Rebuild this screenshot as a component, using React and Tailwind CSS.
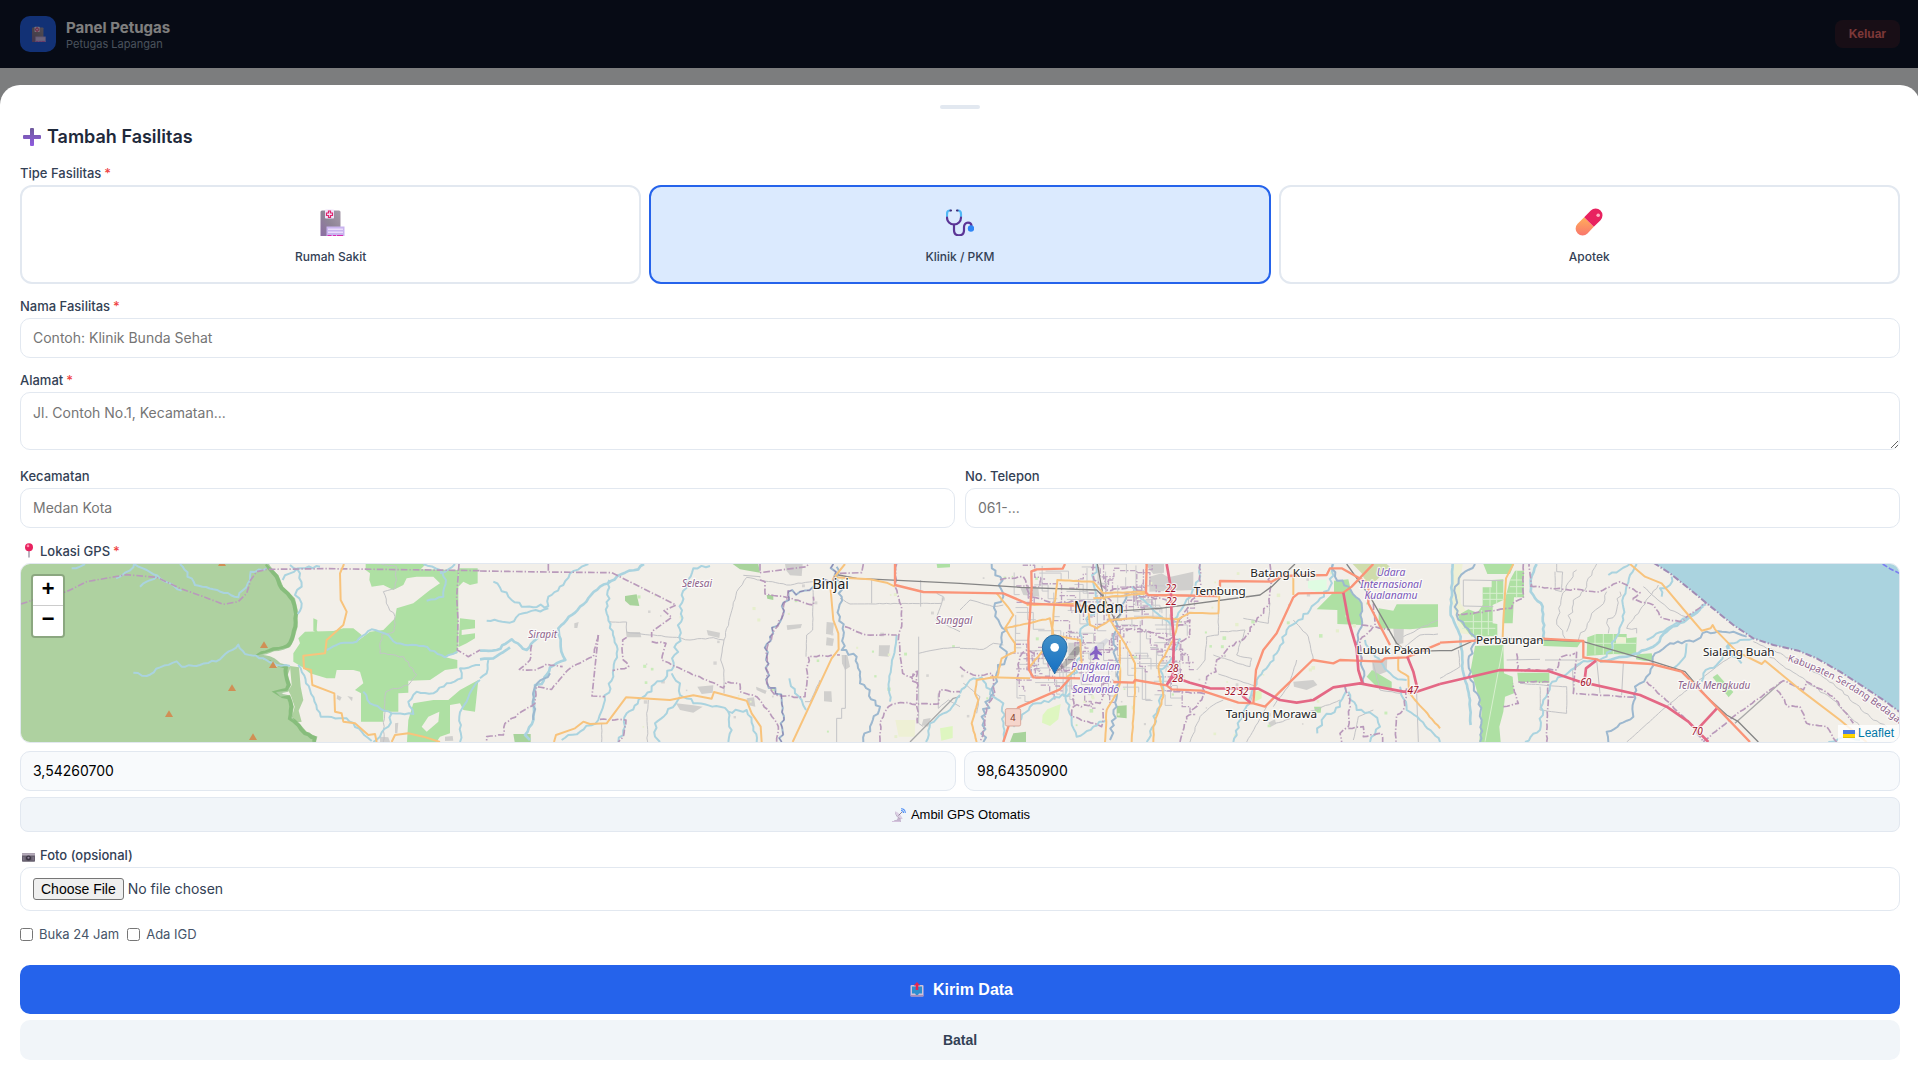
import React from "react";

/* ---------- Map data: [tile, kind, points, wobble] ---------- */
const TILE = 1440;

const AREAS = [
  [0, "park", "40,0 790,0 800,12 835,45 850,80 885,115 893,150 893,200 882,240 870,262 820,272 765,288 790,298 812,300 828,320 850,312 872,322 863,345 873,375 862,392 828,396 842,410 870,405 882,440 874,475 900,492 920,515 950,530 945,560 40,560"],
  [0, "tail", "870,318 897,322 902,380 910,420 896,452 905,485 886,488 876,470 884,440 872,405 865,392 875,375"],
  [0, "wood", "1097,0 1290,0 1262,28 1375,30 1375,230 1372,280 1330,290 1372,300 1372,325 1335,330 1290,360 1225,362 1225,398 1195,400 1195,455 1150,455 1150,485 1083,485 1083,400 1065,390 1090,370 1080,335 1060,330 1010,330 1005,355 980,355 930,340 905,320 880,305 880,280 900,250 895,235 915,215 1000,213 1030,205 1060,205 1085,225 1070,245 1110,215 1150,210 1185,175 1190,145 1240,130 1290,90 1320,70 1300,50 1250,50 1220,55 1210,75 1180,90 1150,75 1115,80 1108,60 1110,40 1097,30"],
  [0, "wood", "1375,25 1433,25 1433,70 1410,75 1390,65 1375,80"],
  [0, "wood", "1380,175 1425,180 1425,205 1385,210 1385,225 1425,220 1425,235 1400,250 1375,262"],
  [0, "wood", "1240,430 1300,420 1345,420 1380,390 1435,360 1425,455 1390,450 1380,430 1350,435 1350,520 1320,530 1300,560 1220,560 1225,480"],
  [0, "wood", "940,175 952,180 950,210 958,225 940,212"],
  [0, "land", "1265,500 1285,470 1318,455 1315,485 1280,515"],
  [0, "land", "1290,375 1360,340 1370,360 1310,385"],
  [0, "town", "1335,530 1358,528 1360,542 1335,543"],
  [0, "town", "1140,530 1165,532 1170,546 1140,546"],
  [0, "town", "1185,490 1195,488 1192,520 1185,520"],
  [0, "town", "1012,405 1025,412 1020,422 1010,416"],
  [0, "town", "1042,408 1058,412 1056,424"],

  [1, "grove", "435,108 470,103 478,138 450,136 435,122"],
  [1, "grove", "758,12 835,12 840,38 780,28"],
  [1, "grove", "100,522 152,522 152,546 104,546"],
  [1, "grove", "860,105 880,105 880,120 862,116"],
  [1, "wood", "1370,12 1410,12 1410,22 1372,24"],
  [1, "town", "915,12 968,12 965,48 930,46 918,30"],
  [1, "town", "283,190 296,186 292,204 283,204"],
  [1, "town", "920,196 966,192 962,204 922,210"],
  [1, "town", "1040,186 1062,188 1058,225 1038,222"],
  [1, "town", "1040,232 1062,236 1058,258 1038,256"],
  [1, "town", "1085,285 1102,285 1110,320 1095,330 1086,310"],
  [1, "town", "1197,256 1230,256 1226,290 1196,288"],
  [1, "town", "1032,394 1054,394 1056,426 1032,424"],
  [1, "town", "652,380 700,376 698,398 665,402"],
  [1, "town", "680,210 720,218 718,234 684,226"],
  [1, "town", "588,430 640,436 668,440 640,458 600,450"],
  [1, "town", "828,380 860,392 856,402 830,390"],
  [1, "town", "800,415 822,412 826,440 806,436"],
  [1, "town", "1330,478 1352,474 1345,500 1325,496"],
  [1, "town", "438,216 480,216 484,232 440,232"],
  [1, "pale", "1246,480 1306,480 1304,530 1256,530"],
  [1, "lime", "1380,505 1418,498 1418,534 1384,542"],

  [2, "town", "180,82 235,85 238,110 190,105"],
  [2, "town", "568,50 605,40 625,52 700,35 700,90 568,95"],
  [2, "town", "325,248 358,248 358,285 325,285"],
  [2, "town", "555,12 612,12 612,38 580,42"],
  [2, "air", "385,280 400,262 438,235 448,240 420,275 395,296"],
  [2, "town", "1000,365 1060,360 1072,375 1040,390 1002,380"],
  [2, "town", "1298,188 1332,185 1330,250 1305,255"],
  [2, "town", "1236,300 1282,295 1280,335 1240,350"],
  [2, "town", "925,488 945,478 948,492 930,502"],
  [2, "grove", "470,438 500,436 500,475 470,472"],
  [2, "grove", "160,520 198,515 198,546 150,546"],
  [2, "wood", "1122,62 1165,58 1175,100 1205,130 1205,195 1132,192 1132,150 1070,148 1122,95"],
  [2, "wood", "1256,145 1300,152 1310,133 1434,133 1434,200 1350,208 1256,205"],
  [2, "wood", "1220,350 1236,330 1295,365 1295,385 1252,382"],
  [2, "wood", "1062,440 1084,440 1082,458 1066,458"],
  [2, "olive", "1178,12 1280,12 1290,20 1238,72 1215,62 1205,40"],
  [2, "mint", "1044,62 1100,58 1100,90 1070,96 1044,84"],
  [2, "lime", "248,465 262,448 302,432 295,478 270,498 246,488"],
  [2, "lime", "884,395 905,390 905,415 884,425"],

  [3, "sea", "630,0 1420,0 1420,475 1378,455 1330,420 1270,380 1200,335 1130,295 1075,272 1000,255 940,235 880,195 800,130 740,80 690,40"],
  [3, "pale", "35,12 68,12 60,70 62,130 88,165 98,225 60,220 45,165 36,120"],
  [3, "wood", "130,12 222,12 210,42 142,42"],
  [3, "wood", "128,82 155,82 155,60 190,58 190,120 158,135 158,190 172,192 172,228 95,230 60,185 55,165 85,148 112,158 128,135"],
  [3, "wood", "210,60 225,32 252,32 252,112 222,112 218,190 192,190 192,130"],
  [3, "wood", "105,258 190,255 192,340 218,350 222,400 195,410 190,455 178,500 182,546 118,546 125,450 110,390 92,330"],
  [3, "wood", "310,238 425,242 412,262 310,258"],
  [3, "wood", "442,232 470,222 560,222 560,235 590,232 588,285 520,282 440,288"],
  [3, "wood", "232,338 328,338 328,368 235,366"],
  [3, "wood", "590,283 635,280 640,300 615,303 588,298"],
  [3, "wood", "818,352 832,342 880,396 866,412"],
  [3, "pale", "528,230 558,232 558,252 528,252"],
];

const LINES = [
  /* province and district boundaries */
  [0, "edge", "63,132 100,120 200,95 260,65 380,44 470,52 540,85 610,110 670,133 715,125 740,100 752,60 770,35 800,28 980,26 1440,32", 0],
  [0, "edge", "1377,12 1370,110 1374,180 1372,270 1405,290 1440,270", 0],
  [1, "edge", "0,33 200,36 395,38 588,135 552,152 575,172 515,215 515,232", 0],
  [1, "edge", "205,12 205,36", 0],
  [1, "edge", "440,232 428,240 430,300 446,320 398,332", 3],
  [1, "edge", "515,245 558,250 545,300 730,384 740,365 780,372 780,395 830,410 870,460 895,500 890,546", 2],
  [1, "edge", "355,225 340,290 270,325 215,388 170,380 165,430 75,490 70,525 20,530 20,546", 2],
  [1, "edge", "355,225 336,408 375,410", 0],
  [1, "edge", "155,255 150,300 118,328 165,330 200,312 248,320", 2],
  [1, "edge", "360,478 438,480 430,530 415,546", 2],
  [1, "edge", "840,12 840,38 980,20 985,12", 0],
  [1, "edge", "840,60 855,65 855,102 920,112 1000,135 1000,110", 2],
  [1, "edge", "925,90 905,175 880,215 862,260 860,370 885,405 975,410 985,290 1080,285", 4],
  [1, "edge", "1095,200 1160,225 1250,225", 2],
  [1, "edge", "1150,12 1145,38 1080,40", 0],
  [1, "edge", "1250,12 1245,80 1265,150 1265,200 1255,240 1268,340 1295,352 1312,330 1312,490", 3],
  [1, "edge", "1200,546 1200,490 1225,440 1250,430 1375,432 1380,390 1440,395", 3],
  [1, "edge", "1315,370 1295,362 1300,340", 0],
  [2, "edge", "930,12 928,130 888,185 860,225 800,270 770,300 768,335 740,350 725,420 680,470 660,546", 5],
  [2, "edge", "0,320 40,345 95,340 100,355 105,400 80,440 75,500 60,546", 4],
  [2, "edge", "170,360 180,290 200,270 260,290 270,330 330,330", 4],
  [2, "edge", "340,440 420,430 430,370 460,360", 5],
  [2, "edge", "345,380 335,470 425,500 430,440", 4],
  [2, "edge", "720,12 722,80 650,200 690,180 690,230 640,260", 5],
  [2, "edge", "1205,195 1240,200 1200,240 1205,300", 3],
  [2, "edge", "1240,130 1245,200 1290,210", 2],
  [2, "edge", "1155,380 1170,420 1165,500 1140,520 1145,546", 3],
  [2, "edge", "1165,505 1210,500 1210,530 1265,520 1268,546", 2],
  [2, "edge", "1340,385 1330,450 1310,465 1308,546", 3],
  [2, "edge", "400,12 402,60 440,90 520,80 540,110 620,120", 4],
  [2, "edge", "120,60 190,50 210,110 290,130 380,120", 3],
  [2, "edge", "440,110 470,140 460,200 560,210 620,240 640,230", 4],
  [2, "edge", "640,395 730,400 728,380", 2],
  [3, "edge", "250,12 250,115 218,130 215,145 50,165", 2],
  [3, "edge", "270,78 480,95 540,65 600,98 575,118 640,135 660,170 720,185 800,128", 3],
  [3, "edge", "410,275 400,400 585,412", 1],
  [3, "edge", "230,280 232,330 350,330 365,290 405,280", 4],
  [3, "edge", "235,366 325,366 320,546", 2],
  [3, "edge", "190,440 235,430 218,370", 2],
  [3, "edge", "620,365 760,500 790,546 880,470 1030,362 1090,390 1100,365 1180,410 1240,490", 2],
  [3, "edge", "1010,390 1045,440 1080,440 1100,490 1160,500 1190,546", 3],
  [3, "edge", "265,0 275,78", 1],
  [3, "coast", "640,8 690,40 740,80 800,130 880,195 940,235 1000,255 1075,272 1130,295 1200,335 1270,380 1330,420 1378,455", 0],

  /* rivers */
  [0, "river", "215,25 240,20 255,12", 3],
  [0, "river", "348,55 375,38 400,22 402,12 440,30 480,55 545,92", 3],
  [0, "river", "420,80 440,65 470,50", 3],
  [0, "river", "540,12 585,75 640,88 715,112 750,60 752,35 800,25", 5],
  [0, "river", "400,338 440,348 480,322 530,304 545,320 600,315 660,298 715,254 735,282 790,295 830,315 870,318", 3],
  [0, "river", "848,60 870,40 905,25 960,20", 6],
  [0, "river", "870,15 900,40 905,80 885,105 905,130 893,162", 5],
  [0, "river", "895,315 930,390 962,470 1040,475 1085,515 1115,543", 3],
  [0, "river", "980,270 1020,250 1070,245 1115,208 1165,225 1190,250 1270,258 1335,292 1372,275", 3],
  [0, "river", "1270,12 1320,30 1338,60 1330,110 1280,122", 3],
  [0, "river", "1320,40 1345,28 1365,12", 3],
  [0, "river", "1090,395 1110,430 1175,460 1240,462 1225,425 1250,395 1300,400 1340,370 1385,355 1380,325 1440,315", 3],
  [0, "river", "1440,360 1415,390 1400,425 1378,470 1380,546", 5],
  [0, "river", "1175,460 1165,500 1140,530 1120,546", 5],
  [1, "wide", "492,12 475,28 435,38 360,80 300,140 235,205 242,260 256,300 210,322 185,372 165,375 160,480 135,525 150,540", 3],
  [1, "river", "40,65 85,110 125,140 205,138 205,110 250,75 270,40 305,20 325,12", 6],
  [1, "river", "20,182 90,188 130,160 205,145", 5],
  [1, "river", "388,60 380,160 410,280 400,350 375,420 355,480 300,515 245,540", 6],
  [1, "river", "690,18 640,25 605,105 598,230 575,330 440,460 435,500 415,546", 8],
  [1, "river", "575,340 600,370 600,405 640,430 720,440 745,455 800,450 820,500 830,546", 8],
  [1, "river", "745,455 755,510 745,546", 6],
  [1, "river", "600,410 560,460 525,490 525,530 540,546", 5],
  [1, "wide", "0,272 50,270 95,238 140,270 175,225", 4],
  [1, "wide", "0,298 40,295 90,262", 2],
  [1, "river", "0,355 20,340 25,300", 2],
  [1, "river", "928,355 945,400 965,420 978,450", 4],
  [1, "deep", "1060,12 1062,60 1000,80 960,95 925,95 905,175 870,230 858,300 862,370 905,420 912,480 905,546", 10],
  [1, "deep", "1070,20 1085,110 1080,170 1090,230 1085,270 1130,290 1140,370 1200,440 1170,500 1150,546", 9],
  [1, "river", "1250,225 1240,290 1228,360 1230,425", 3],
  [1, "river", "1440,405 1410,450 1350,490 1338,546", 4],
  [1, "deep", "160,480 165,380 210,340", 5],
  [2, "deep", "95,12 120,50 130,110 105,130 115,180 140,210 120,260 140,290 110,340 100,400 65,470 70,546", 10],
  [2, "river", "0,400 40,355 65,352 100,410 130,430 130,546", 5],
  [2, "river", "410,12 400,70 415,130 360,220 365,290 320,390 335,470 350,530 400,500 440,480", 8],
  [2, "river", "330,400 210,440 160,500", 6],
  [2, "deep", "500,100 480,150 460,230 475,320 470,440 450,540", 8],
  [2, "river", "515,80 560,130 640,200", 4],
  [2, "river", "660,235 640,290 600,330 610,400 590,460 560,546", 7],
  [2, "river", "720,12 718,60 640,190", 5],
  [2, "river", "1120,12 1110,80 1050,150 980,210 950,280 890,360 870,430 840,480 820,546", 6],
  [2, "deep", "1118,12 1125,50 1165,80 1205,130 1205,200 1190,250 1205,300 1210,370", 6],
  [2, "river", "1215,240 1245,290 1300,350 1340,360", 5],
  [2, "river", "1440,546 1380,480 1340,450 1320,380", 5],
  [2, "river", "1155,380 1140,440 1085,480 1072,520", 7],
  [2, "river", "1165,395 1190,450 1240,465 1260,500 1230,546", 6],
  [3, "wide", "38,12 32,165 62,230 68,330 90,420 92,495", 2],
  [3, "deep", "105,12 75,35 45,80 50,165 75,200 108,235 85,300 92,360 120,420 125,480 120,546", 6],
  [3, "wide", "290,12 272,60 272,95 308,140 312,240", 3],
  [3, "river", "590,12 570,45 550,110 550,180 530,230 500,290 420,310 330,375 310,420 300,510 255,546", 5],
  [3, "river", "505,45 540,30 570,12", 3],
  [3, "river", "695,50 690,75 660,85 665,110", 5],
  [3, "wide", "798,132 760,165 680,215 640,260 560,290 480,305", 4],
  [3, "river", "790,140 720,185 620,240", 3],
  [3, "deep", "920,230 880,215 800,215 760,245 690,250 645,280 630,340 612,365 585,380 580,470 500,515 505,546", 5],
  [3, "river", "870,250 830,315 790,340 785,365", 5],
  [3, "river", "940,235 900,240 860,260 905,310", 6],
  [3, "river", "740,250 735,290 700,325", 3],
  [3, "river", "1165,546 1220,530 1260,540", 3],

  /* small roads */
  [0, "lane", "1130,12 1190,20 1185,85 1150,95 1165,140 1185,170 1182,215 1145,225 1140,280 1210,290 1250,345 1225,375 1158,395 1150,546", 3],
  [1, "lane", "385,184 440,186 440,216 590,232 630,240 700,233 732,240 770,95 800,52 920,75 1000,65", 2],
  [1, "lane", "790,46 840,50", 0],
  [1, "lane", "732,240 722,300 732,330 732,400", 1],
  [1, "lane", "1000,75 998,210 980,225 978,290", 1],
  [1, "lane", "505,420 500,460 503,546", 2],
  [1, "lane", "975,425 990,425 1020,360", 1],
  [1, "lane", "1096,285 1096,445 1085,445 1085,475 1070,475 1070,546", 0],
  [1, "lane", "1080,115 1110,132 1385,130 1390,110 1370,100", 1],
  [1, "lane", "1175,60 1175,130", 0],
  [1, "lane", "1322,60 1322,140", 0],
  [1, "lane", "1316,230 1316,490 1330,500", 0],
  [1, "lane", "1316,280 1390,265 1440,262", 1],
  [1, "lane", "1385,130 1368,180 1440,215", 1],
  [1, "grey", "1290,546 1420,415 1440,410", 0],
  [1, "lane", "365,490 365,546", 1],
  [1, "lane", "1375,400 1375,445 1405,420 1440,440", 1],
  [2, "lane", "0,265 70,268 100,250 130,255", 1],
  [2, "lane", "0,150 30,120 100,140 130,135", 1],
  [2, "lane", "10,370 60,410 50,460", 2],
  [2, "lane", "710,330 735,300 740,230 775,225 775,160", 1],
  [2, "lane", "780,215 855,210 830,285 875,295 870,320 760,285", 2],
  [2, "lane", "930,130 925,190 850,175", 1],
  [2, "lane", "1000,180 1045,230 1060,300", 2],
  [2, "lane", "775,342 885,378 870,430", 1],
  [2, "lane", "690,546 720,470 760,435 790,420", 2],
  [2, "lane", "920,440 860,546", 1],
  [2, "lane", "945,490 1010,470 1140,420", 2],
  [2, "lane", "1010,300 990,370 940,440", 2],
  [2, "lane", "1180,540 1195,470 1240,450", 1],
  [2, "lane", "1370,400 1375,546", 0],
  [2, "lane", "1240,310 1260,390 1320,400", 1],
  [2, "lane", "1330,230 1434,180", 2],
  [2, "lane", "1335,260 1380,225 1434,222", 2],
  [3, "lane", "0,355 60,320 55,270", 1],
  [3, "lane", "70,60 190,62", 0],
  [3, "lane", "70,60 70,138 160,140", 0],
  [3, "lane", "350,12 350,35 368,36 365,95 345,90 345,35", 1],
  [3, "lane", "410,30 365,110 350,180 375,235", 6],
  [3, "lane", "470,12 440,80 400,120 380,215", 7],
  [3, "lane", "500,95 480,140 455,160 415,240", 6],
  [3, "lane", "540,95 530,150 500,190 505,220", 6],
  [3, "lane", "655,75 600,150 560,205 590,205 590,220", 3],
  [3, "lane", "315,300 420,300 430,295", 0],
  [3, "lane", "300,380 300,450 380,460 380,380 240,370", 1],
  [3, "lane", "400,400 398,330 425,310", 0],
  [3, "lane", "550,310 545,405", 0],
  [3, "lane", "470,300 480,400", 0],
  [3, "lane", "560,546 690,430 830,320 900,270", 1],
  [3, "lane", "940,245 1080,310 1180,370 1300,480 1340,500", 3],
  [3, "lane", "960,270 1050,330 1180,420 1260,500", 3],
  [3, "grey", "885,490 1025,365", 0],
  [3, "lane", "200,300 300,298", 0],
  [3, "lane", "610,80 690,150 760,180", 2],

  /* railways */
  [1, "rail", "1075,45 1130,55 1270,62 1440,70", 0],
  [2, "rail", "0,70 180,82 410,90 430,110", 0],
  [2, "rail", "412,12 430,110 465,180 490,152 600,145 900,105 935,80 965,50 1005,12", 0],
  [2, "rail", "1160,12 1230,110 1310,250 1340,275 1440,272", 0],
  [3, "rail", "0,272 35,272 105,240 200,235 430,245 640,305 735,335 800,410 860,465 895,485 955,546", 0],

  /* secondary roads */
  [0, "second", "1032,12 1020,40 1022,120 1040,155 1030,195 980,240 975,280 910,287 912,325 933,330 937,375 1003,400 1005,455 1025,460 1030,485 1065,490 1105,525 1125,522 1130,546", 0],
  [0, "second", "1175,546 1185,525 1225,520 1270,530 1320,546", 0],
  [1, "second", "222,546 228,525 285,505 310,485 330,492 380,490 438,412 570,420 640,406 695,416 702,396 800,422 815,460 842,500 845,546", 0],
  [1, "second", "938,546 1055,295 1076,268 1075,220 1060,180 1052,90 1060,55 1095,12", 0],
  [1, "second", "1060,52 1170,58 1220,68 1245,80", 0],
  [2, "second", "110,100 135,130 160,165 135,205 165,250 165,275 125,295 112,350 50,360 45,400 55,420 35,490 50,546", 1],
  [2, "second", "135,205 270,175 280,225 360,240 365,310 320,352", 1],
  [2, "second", "210,355 90,352", 0],
  [2, "second", "205,325 275,240 280,165 292,60 400,65 430,100 560,95", 1],
  [2, "second", "400,115 560,100", 1],
  [2, "second", "200,135 350,130 385,150 390,195 410,205 450,180 560,172 655,178 690,158 775,160 778,110 740,105", 1],
  [2, "second", "430,110 450,180 500,260 525,310 525,400 515,546", 1],
  [2, "second", "480,240 480,370 470,400 440,450 435,546", 1],
  [2, "second", "655,178 640,240 595,320 610,410 580,500 580,546", 2],
  [2, "second", "1000,50 1000,105", 0],
  [2, "second", "1315,290 1315,330 1345,350 1348,400 1440,505", 1],
  [3, "second", "220,12 198,55 190,180 188,232", 0],
  [3, "second", "570,12 615,50 665,70 745,165 785,212 812,205 818,195 825,208 890,275 965,312 975,302 1075,385 1200,480 1260,530 1280,546", 0],

  /* primary roads */
  [1, "prime", "1245,12 1245,75 1330,96 1440,98", 0],
  [2, "prime", "0,98 130,100 200,130 400,140", 0],
  [2, "prime", "315,12 308,26 230,28 214,34 215,80 205,240 207,330 220,352 360,355", 0],
  [2, "prime", "130,546 155,470 175,442 300,388 330,355", 0],
  [2, "prime", "460,366 520,368 525,360 620,376 635,388 725,392 835,428 880,430 915,440 960,395 1058,300 1120,310 1140,300 1190,302 1265,305 1275,295 1340,292 1440,250", 0],
  [2, "prime", "560,12 558,98 565,105 770,108", 0],
  [2, "prime", "780,80 780,63 935,65 965,48 1100,45 1110,25 1145,25 1225,70 1225,130 1290,255", 0],
  [2, "prime", "880,430 888,330 910,270 950,220 1000,112 1015,100 1150,98 1175,80 1240,12", 0],
  [3, "prime", "0,248 110,242", 0],
  [3, "prime", "305,236 430,243 430,292 470,298 480,303 635,312 725,335 790,400 930,546", 0],

  /* motorways */
  [2, "motor", "620,12 632,80 635,170 642,240 638,345 622,372 640,350 690,368 750,385 895,386 960,420 1010,428 1060,420 1120,382 1200,370 1330,395 1370,395 1440,372", 0],
  [2, "motor", "842,386 850,410 872,428", 0],
  [2, "motor", "1150,98 1165,180 1190,265 1195,330 1208,372", 0],
  [2, "motor", "1342,290 1360,335 1372,385", 0],
  [3, "motor", "0,372 180,330 325,333 420,365 600,405 680,440 745,485 805,546", 0],
  [3, "motor", "434,360 438,325 468,302", 0],
  [3, "motor", "775,505 830,446", 0],
];

const AREA_STYLE = {
  park: "#aed1a0",
  tail: "#add19e",
  wood: "#aee0a3",
  grove: "#a8d39b",
  land: "#f2efe9",
  town: "#d0cfcd",
  air: "#dadae0",
  pale: "#eef0d5",
  lime: "#def6c0",
  mint: "#dffce2",
  olive: "#cfdcab",
  sea: "#aad3df",
};

const LINE_ORDER = ["lane", "grey", "river", "wide", "deep", "edge", "coast", "rail", "second", "prime", "motor"];
const LINE_STYLE = {
  lane: { stroke: "#c3c3c6", strokeWidth: 3 },
  grey: { stroke: "#a8a8a8", strokeWidth: 4 },
  river: { stroke: "#aad3df", strokeWidth: 6 },
  wide: { stroke: "#aad3df", strokeWidth: 8 },
  deep: { stroke: "#9db8cf", strokeWidth: 6 },
  edge: { stroke: "#b99abb", strokeWidth: 5, strokeDasharray: "20 6 4 6" },
  coast: { stroke: "#a08bb5", strokeWidth: 6, strokeDasharray: "20 6 4 6" },
  rail: { stroke: "#858585", strokeWidth: 4 },
  second: { stroke: "#f8c37c", strokeWidth: 6 },
  prime: { stroke: "#fa9478", strokeWidth: 7 },
  motor: { stroke: "#e46885", strokeWidth: 8 },
};

const PLACES = [
  [1, 1052, 88, "Binjai", 42],
  [2, 416, 159, "Medan", 46],
  [2, 779, 106, "Tembung", 35],
  [2, 969, 50, "Batang Kuis", 35],
  [2, 934, 473, "Tanjung Morawa", 35],
  [2, 1301, 281, "Lubuk Pakam", 35],
  [3, 209, 251, "Perbaungan", 35],
  [3, 896, 288, "Sialang Buah", 35],
];

const DISTRICTS = [
  [1, 188, 235, "Sirapit"],
  [1, 651, 80, "Selesai"],
  [1, 1422, 192, "Sunggal"],
  [3, 822, 387, "Teluk Mengkudu"],
];

const AIRPORTS = [
  [2, 407, 329, "Pangkalan"],
  [2, 407, 365, "Udara"],
  [2, 407, 400, "Soewondo"],
  [2, 1293, 47, "Udara"],
  [2, 1293, 83, "Internasional"],
  [2, 1293, 118, "Kualanamu"],
];

const SHIELDS = [
  [2, 632, 97, "22"],
  [2, 634, 136, "22"],
  [2, 639, 335, "28"],
  [2, 653, 365, "28"],
  [2, 811, 404, "32"],
  [2, 849, 404, "32"],
  [2, 1359, 402, "47"],
  [3, 437, 379, "60"],
  [3, 772, 525, "70"],
];

const PEAKS = [
  [666, 8],
  [792, 254],
  [819, 314],
  [696, 383],
  [507, 461],
  [759, 530],
];

const noise = (n) => {
  const s = Math.sin(n * 127.1 + 3.7) * 43758.5453;
  return (s - Math.floor(s)) * 2 - 1;
};

/* Turns a coarse list of points into a path, bending it every few units. */
function trace(points, wobble) {
  const pts = points.split(" ").map((p) => p.split(",").map(Number));
  let d = `M${pts[0][0]} ${pts[0][1]}`;
  for (let i = 1; i < pts.length; i++) {
    const [ax, ay] = pts[i - 1];
    const [bx, by] = pts[i];
    const len = Math.hypot(bx - ax, by - ay);
    if (wobble && len > 0) {
      const steps = Math.floor(len / 11);
      for (let k = 1; k < steps; k++) {
        const t = k / steps;
        const o = noise(ax + by + k * 7) * wobble;
        const x = ax + (bx - ax) * t - ((by - ay) / len) * o;
        const y = ay + (by - ay) * t + ((bx - ax) / len) * o;
        d += `L${x.toFixed(1)} ${y.toFixed(1)}`;
      }
    }
    d += `L${bx} ${by}`;
  }
  return d;
}

/* Dense city streets around Medan. */
const STREETS = Array.from({ length: 90 }, (_, i) => {
  const x = 400 + noise(i + 1) * 240;
  const y = 210 + noise(i + 50) * 200;
  const len = 30 + Math.abs(noise(i + 90)) * 80;
  const k = i % 3;
  return k === 0
    ? `M${x} ${y}h${len}v${len / 3}`
    : k === 1
      ? `M${x} ${y}v${len}h${len / 4}`
      : `M${x} ${y}h${len / 2}v${len / 2}h${len / 3}`;
});

const WARDS = Array.from({ length: 56 }, (_, i) => {
  const x = 400 + noise(i + 211) * 250;
  const y = 200 + noise(i + 322) * 210;
  const a = 20 + Math.abs(noise(i + 433)) * 40;
  const s = noise(i + 12) > 0 ? 1 : -1;
  return `M${x} ${y}h${a}v${a * s}h${a / 2}v${(a / 2) * s}h${a / 3}`;
});

const SPECKS = Array.from({ length: 110 }, (_, i) => ({
  x: 1900 + ((noise(i + 5) + 1) / 2) * 2300,
  y: 20 + ((noise(i + 77) + 1) / 2) * 510,
  s: 4 + Math.abs(noise(i + 31)) * 7,
  c: i % 3 === 0 ? "#c9ecb9" : i % 3 === 1 ? "#d6d4d2" : "#e6efcd",
}));

const at = (tile) => `translate(${tile * TILE} 0)`;

function MapText({ items, className, size, fill }) {
  return items.map(([tile, x, y, text, own], i) => (
    <text
      key={i}
      x={tile * TILE + x}
      y={y}
      fontSize={own || size}
      fill={fill}
      stroke="#ffffff"
      strokeOpacity="0.75"
      strokeWidth="7"
      strokeLinejoin="round"
      paintOrder="stroke"
      textAnchor="middle"
      className={className}
    >
      {text}
    </text>
  ));
}

function MapDrawing() {
  return (
    <svg
      viewBox="63 12 5634 534"
      preserveAspectRatio="xMidYMid slice"
      className="block h-full w-full bg-[#f2efe9]"
      role="img"
      aria-label="Peta Medan dan sekitarnya"
    >
      {AREAS.map(([tile, kind, pts], i) => (
        <polygon key={i} transform={at(tile)} points={pts} fill={AREA_STYLE[kind]} />
      ))}
      <path
        d={trace("800,12 830,50 845,85 878,120 886,150 886,200 875,238 862,258 820,268 775,286 795,292 820,300 838,315 858,320 858,345 866,375 860,390 830,397 848,408 866,412 874,440 870,475 895,495 915,520 945,534 942,546", 3)}
        fill="none"
        stroke="#5faa58"
        strokeOpacity="0.5"
        strokeWidth="12"
      />
      {SPECKS.map((p, i) => (
        <rect key={i} x={p.x} y={p.y} width={p.s} height={p.s} fill={p.c} />
      ))}
      <g transform={at(3)} stroke="#d8efcf" strokeWidth="3">
        <path d="M128 100h62M128 118h62M60 185h100M66 205h100M150 82v60M170 60v70M210 60h42M210 80h42M200 100h52M230 32v80M100 165v60M125 150v75M145 150v75M465 222v62M490 222v62M520 222v62M442 250h146M190 255l-55 290" fill="none" />
      </g>
      <g fill="none" strokeLinejoin="round">
        <g transform={at(2)} stroke="#c9c9cc" strokeWidth="3">
          {STREETS.map((d, i) => (
            <path key={i} d={d} />
          ))}
        </g>
        <g transform={at(2)} stroke="#bda3c0" strokeWidth="4" strokeDasharray="16 5 4 5">
          {WARDS.map((d, i) => (
            <path key={i} d={d} />
          ))}
        </g>
        {LINE_ORDER.map((kind) => (
          <g key={kind} {...LINE_STYLE[kind]}>
            {LINES.filter((l) => l[1] === kind).map(([tile, , pts, wobble], i) => (
              <path key={i} transform={at(tile)} d={trace(pts, wobble)} />
            ))}
          </g>
        ))}
        <path
          transform={at(1)}
          d={trace("1060,12 1062,60 1000,80 960,95 925,95 905,175 870,230 858,300 862,370 905,420 912,480 905,546", 10)}
          stroke="#8f7fae"
          strokeWidth="3"
          strokeDasharray="16 8"
        />
        <path transform={at(3)} d="M1328 12l22 14 28 14" stroke="#7b7df0" strokeWidth="5" strokeDasharray="16 6" />
      </g>
      {PEAKS.map(([x, y], i) => (
        <path key={i} d={`M${x} ${y - 10}l12 20h-24z`} fill="#d08f55" />
      ))}
      <path
        transform={at(2)}
        d="M408 258c4 0 5 5 5 12l13 12v5l-13-5v10l5 5v3l-10-3-10 3v-3l5-5v-10l-13 5v-5l13-12c0-7 1-12 5-12z"
        fill="#8461c4"
      />
      <g transform={at(2)}>
        <rect x="136" y="446" width="46" height="52" rx="5" fill="#f5d5cb" stroke="#d9a99c" strokeWidth="3" />
      </g>
      <text x={2 * TILE + 159} y="482" fontSize="28" textAnchor="middle" fill="#7d3325" className="font-['Noto_Sans',sans-serif]">
        4
      </text>
      <MapText items={PLACES} size={35} fill="#222222" className="font-['Noto_Sans',sans-serif]" />
      <MapText items={DISTRICTS} size={30} fill="#8d618b" className="font-['Noto_Sans',sans-serif] italic" />
      <MapText items={AIRPORTS} size={31} fill="#7a56b8" className="font-['Noto_Sans',sans-serif] italic" />
      <MapText items={SHIELDS} size={30} fill="#a01228" className="font-['Noto_Sans',sans-serif] italic" />
      <path id="coastline" transform={at(3)} d="M1042 303Q1215 355 1400 512" fill="none" />
      <text
        fontSize="29"
        fill="#8d618b"
        stroke="#ffffff"
        strokeOpacity="0.75"
        strokeWidth="6"
        paintOrder="stroke"
        className="font-['Noto_Sans',sans-serif]"
      >
        <textPath href="#coastline">Kabupaten Serdang Bedagai</textPath>
      </text>
      <g transform={at(2)}>
        <path d="M285 340L345 262q18-10 14 12-10 30-74 66z" fill="#000000" opacity="0.22" />
        <path
          d="M284 342c-4-14-37-52-37-80a37 37 0 0 1 74 0c0 28-33 66-37 80z"
          fill="url(#pin)"
          stroke="#2a6da3"
          strokeWidth="3"
        />
        <circle cx="284" cy="262" r="13" fill="#ffffff" />
      </g>
      <defs>
        <linearGradient id="pin" x1="0" y1="0" x2="0" y2="1">
          <stop offset="0" stopColor="#4290c8" />
          <stop offset="1" stopColor="#1570c4" />
        </linearGradient>
      </defs>
    </svg>
  );
}

/* ---------- Icons ---------- */
function HospitalIcon({ className }) {
  return (
    <svg viewBox="-1 -1 28 28" className={className} aria-hidden="true">
      <defs>
        <linearGradient id="tower" x1="1" y1="0" x2="0" y2="1">
          <stop offset="0" stopColor="#a79bab" />
          <stop offset="0.5" stopColor="#8f8596" />
          <stop offset="1" stopColor="#8b6aa5" />
        </linearGradient>
      </defs>
      <path d="M2.500 3Q2.500 1.500 4 1.500H21q1.500 0 1.500 1.500V28h-20z" fill="url(#tower)" />
      <rect x="7" y="0.500" width="9" height="9" rx="0.800" fill="#f0e4fa" />
      <path d="M10.500 2h2v2h2v2.500h-2v2h-2v-2h-2V4h2z" fill="#f0e4fa" stroke="#e0256d" strokeWidth="1.200" />
      <path d="M8.500 17.500h18V28h-18z" fill="#c9b3ee" />
      <path d="M10 19.500h15V21H10zM10 22.500h15V24H10z" fill="#eadcfb" />
      <path d="M9.500 26h4v2h-4zM15 26h3v2h-3zM19 26h6v2h-6z" fill="#d92bb2" />
    </svg>
  );
}

function StethoscopeIcon({ className }) {
  return (
    <svg viewBox="0 -1 28 28" className={className} aria-hidden="true" fill="none" strokeLinecap="round">
      <path d="M4 1.500C1.500 1.500 1 3 1 5v3M12 1.500C14.500 1.500 15 3 15 5v3" stroke="#4fb8f5" strokeWidth="2.200" />
      <path d="M1 8.500c0 4 3 7 7 7s7-3 7-7" stroke="#5b3596" strokeWidth="2.200" />
      <path d="M8 15.500v5.500c0 3.200 2 5.300 5 5.300s5-2 5-5V18c0-2.500 1.500-4.300 4-4.300s3.500 1.500 3.500 3.500" stroke="#5b3596" strokeWidth="2.200" />
      <path d="M4.500 1.500h.5M11.500 1.500h-.5" stroke="#43307c" strokeWidth="2.200" />
      <circle cx="25" cy="19.500" r="3.200" fill="#2f86f6" />
    </svg>
  );
}

function PillIcon({ className }) {
  return (
    <svg viewBox="0 0 28 28" className={className} aria-hidden="true">
      <defs>
        <linearGradient id="capsule" x1="0" y1="0" x2="0" y2="1">
          <stop offset="0" stopColor="#ffae5a" />
          <stop offset="1" stopColor="#f9766d" />
        </linearGradient>
      </defs>
      <path d="M9.200 9.200 18.800 18.800 12.500 25.500a6.800 6.800 0 0 1-9.900-9.700z" fill="url(#capsule)" />
      <path d="M9.200 9.200 15.800 2.500a6.800 6.800 0 0 1 9.700 9.700L18.800 18.800z" fill="#e8225f" />
      <circle cx="23.200" cy="7.200" r="1.800" fill="#ffb3c4" />
    </svg>
  );
}

function PlusIcon({ className }) {
  return (
    <svg viewBox="0 0 18 18" className={className} aria-hidden="true">
      <defs>
        <linearGradient id="plus" x1="0" y1="0" x2="0" y2="1">
          <stop offset="0" stopColor="#6f5a9c" />
          <stop offset="1" stopColor="#8f5be0" />
        </linearGradient>
      </defs>
      <path d="M7 1q0-1 1-1h2q1 0 1 1v6h6q1 0 1 1v2q0 1-1 1h-6v6q0 1-1 1H8q-1 0-1-1v-6H1q-1 0-1-1V8q0-1 1-1h6z" fill="url(#plus)" />
    </svg>
  );
}

function PinIcon({ className }) {
  return (
    <svg viewBox="0 0 10 15" className={className} aria-hidden="true">
      <path d="M4.400 7h1.200v7l-.6 1-.6-1z" fill="#8c8296" />
      <circle cx="5" cy="4.200" r="4" fill="#e8225f" />
      <circle cx="4" cy="2.900" r="1.300" fill="#ff8fae" />
    </svg>
  );
}

function DishIcon({ className }) {
  return (
    <svg viewBox="0 0 14 14" className={className} aria-hidden="true">
      <path d="M1.500 14 2.500 12h2l2-3h2l.5 5z" fill="#c5b5cf" />
      <path d="M3 3.500c0 4 3 7.500 7.500 7.500z" fill="#a89bb3" />
      <path d="M3 3.500c2-.5 7.500 4.500 7.500 7.500-3.500-.3-7-3.500-7.500-7.500z" fill="#dccfe4" />
      <path d="M6.500 7.500 10 4" stroke="#8f8399" strokeWidth="1" />
      <path d="M9 2.500c1.500 0 2.500 1 2.500 2.500M9 .7c2.500 0 4.300 1.800 4.300 4.300" stroke="#4c8df5" strokeWidth="1.100" fill="none" />
      <path d="M0 13h8v1H0z" fill="#d3c2dc" />
    </svg>
  );
}

function CameraIcon({ className }) {
  return (
    <svg viewBox="0 0 14 10" className={className} aria-hidden="true">
      <rect x="0" y="1" width="14" height="9" rx="0.800" fill="#67606f" />
      <path d="M0 1.800Q0 1 .8 1h12.400q.8 0 .8.800V3.500H0z" fill="#b5abba" />
      <circle cx="7" cy="6.200" r="2.700" fill="#3b3543" />
      <circle cx="7" cy="5.800" r="1.200" fill="#93889e" />
      <path d="M1.500 5h1v3.500h-1zM11.500 5h1v3.500h-1z" fill="#8a8193" />
    </svg>
  );
}

function OutboxIcon({ className }) {
  return (
    <svg viewBox="0 0 14 15" className={className} aria-hidden="true">
      <rect x="0.500" y="3" width="13" height="11.500" rx="1" fill="#cfc2d8" />
      <path d="M2 4.500h10v7H9l-1 1.500H6L5 11.500H2z" fill="#2c8fd0" />
      <path d="M.5 13h13v1.500H.5z" fill="#a78fbb" />
      <path d="M7 0l3.200 3.500H8.300V8H5.700V3.500H3.800z" fill="#e3264f" />
    </svg>
  );
}

/* ---------- Form pieces ---------- */
const FIELD =
  "block w-full rounded-[10px] border border-[#e2e8f0] bg-white px-3 py-[9px] text-sm leading-5 text-[#1e293b] outline-none placeholder:text-[#757575]";

function Label({ htmlFor, required, icon, children }) {
  return (
    <label htmlFor={htmlFor} className="mb-1 flex items-center text-[13px] leading-4 font-medium text-[#334155]">
      {icon}
      {children}
      {required && <span className="ml-[3px] text-[#ef4444]">*</span>}
    </label>
  );
}

const TYPES = [
  { id: "rs", name: "Rumah Sakit", Icon: HospitalIcon },
  { id: "klinik", name: "Klinik / PKM", Icon: StethoscopeIcon },
  { id: "apotek", name: "Apotek", Icon: PillIcon },
];

export default function App() {
  const [type, setType] = React.useState("klinik");
  return (
    <div className="min-h-screen bg-[#f8fafc] font-[Inter,sans-serif]">
      <header className="flex items-center justify-between bg-[#0f172a] py-4 pr-[18px] pl-5">
        <div className="flex items-center gap-2.5">
          <div className="flex size-9 items-center justify-center rounded-[10px] bg-[#2563eb]">
            <HospitalIcon className="size-4" />
          </div>
          <div>
            <h1 className="text-[15px] leading-5 font-bold text-white">Panel Petugas</h1>
            <p className="text-[11px] leading-3 text-[#94a3b8]">Petugas Lapangan</p>
          </div>
        </div>
        <button
          type="button"
          className="rounded-lg bg-[#ef4444]/15 px-3.5 py-1.5 font-['Liberation_Sans',sans-serif] text-xs font-bold text-[#f87171]"
        >
          Keluar
        </button>
      </header>

      <div className="fixed inset-0 -right-0.5 -bottom-0.5 flex items-end bg-black/50">
        <form className="w-full rounded-t-[20px] bg-white p-5" onSubmit={(e) => e.preventDefault()}>
          <div className="mx-auto mb-4 h-1 w-10 rounded-full bg-[#e2e8f0]" />
          <h2 className="mb-4 flex items-center text-[18px] leading-6 font-semibold text-[#1e293b]">
            <PlusIcon className="mr-1.5 ml-[3px] size-[18px]" />
            Tambah Fasilitas
          </h2>

          <fieldset className="mb-3.5">
            <legend className="mb-1 flex items-center text-[13px] leading-4 font-medium text-[#334155]">
              Tipe Fasilitas <span className="ml-[3px] text-[#ef4444]">*</span>
            </legend>
            <div className="grid grid-cols-3 gap-2">
              {TYPES.map(({ id, name, Icon }) => (
                <button
                  key={id}
                  type="button"
                  aria-pressed={type === id}
                  onClick={() => setType(id)}
                  className={
                    type === id
                      ? "flex flex-col items-center rounded-xl border-2 border-[#2563eb] bg-[#dbeafe] pt-[21px] pb-[17px] text-xs leading-4 font-medium text-[#334155]"
                      : "flex flex-col items-center rounded-xl border-2 border-[#e2e8f0] bg-white pt-[21px] pb-[17px] text-xs leading-4 font-medium text-[#334155]"
                  }
                >
                  <Icon className="mb-[13px] size-7" />
                  {name}
                </button>
              ))}
            </div>
          </fieldset>

          <div className="mb-3.5">
            <Label htmlFor="nama" required>
              Nama Fasilitas
            </Label>
            <input id="nama" className={FIELD} placeholder="Contoh: Klinik Bunda Sehat" />
          </div>

          <div className="mb-[18px]">
            <Label htmlFor="alamat" required>
              Alamat
            </Label>
            <textarea
              id="alamat"
              className="block h-[58px] w-full resize-y rounded-[10px] border border-[#e2e8f0] bg-white px-3 py-[10px] text-sm leading-5 text-[#1e293b] outline-none placeholder:text-[#757575]"
              placeholder="Jl. Contoh No.1, Kecamatan..."
            />
          </div>

          <div className="mb-3.5 grid grid-cols-2 gap-2.5">
            <div>
              <Label htmlFor="kecamatan">Kecamatan</Label>
              <input id="kecamatan" className={FIELD} placeholder="Medan Kota" />
            </div>
            <div>
              <Label htmlFor="telepon">No. Telepon</Label>
              <input id="telepon" type="tel" className={FIELD} placeholder="061-..." />
            </div>
          </div>

          <div className="mb-3.5">
            <Label htmlFor="lat" required icon={<PinIcon className="mr-1.5 ml-1 h-[17px] w-2.5" />}>
              Lokasi GPS
            </Label>
            <div className="relative h-[180px] overflow-hidden rounded-[10px] border border-[#e2e8f0]">
              <MapDrawing />
              <div className="absolute top-2.5 left-2.5 flex flex-col overflow-hidden rounded border-2 border-black/20 bg-clip-padding font-['Liberation_Mono',monospace] text-[22px] font-bold text-black">
                <button type="button" aria-label="Zoom in" className="h-[30px] w-[30px] border-b border-[#cccccc] bg-white leading-[30px]">
                  +
                </button>
                <button type="button" aria-label="Zoom out" className="h-[30px] w-[30px] bg-white leading-[30px]">
                  −
                </button>
              </div>
              <a
                href="#leaflet"
                className="absolute right-0 bottom-0 flex items-center gap-[3px] bg-white/80 px-[5px] font-['Liberation_Sans',sans-serif] text-xs leading-[17px] text-[#0078a8]"
              >
                <svg viewBox="0 0 12 8" className="h-2 w-3" aria-hidden="true">
                  <path fill="#4c7be1" d="M0 0h12v4H0z" />
                  <path fill="#ffd500" d="M0 4h12v3H0z" />
                  <path fill="#e0bc00" d="M0 7h12v1H0z" />
                </svg>
                Leaflet
              </a>
            </div>
            <div className="mt-2 grid grid-cols-2 gap-2">
              <input
                id="lat"
                aria-label="Latitude"
                readOnly
                value="3,54260700"
                className="block w-full rounded-[10px] border border-[#e2e8f0] bg-[#f8fafc] px-3 py-[9px] text-sm leading-5 text-black outline-none"
              />
              <input
                aria-label="Longitude"
                readOnly
                value="98,64350900"
                className="block w-full rounded-[10px] border border-[#e2e8f0] bg-[#f8fafc] px-3 py-[9px] text-sm leading-5 text-black outline-none"
              />
            </div>
            <button
              type="button"
              className="mt-1.5 flex h-[35px] w-full items-center justify-center rounded-lg border border-[#e2e8f0] bg-[#f1f5f9] font-['Liberation_Sans',sans-serif] text-[13px] text-black"
            >
              <DishIcon className="mr-[5px] ml-0.5 size-3.5" />
              Ambil GPS Otomatis
            </button>
          </div>

          <div className="mb-3.5">
            <Label htmlFor="foto" icon={<CameraIcon className="mt-[5px] mr-[5px] ml-0.5 h-3 w-[13px]" />}>
              Foto (opsional)
            </Label>
            <input
              id="foto"
              type="file"
              className="block w-full rounded-[10px] border border-[#e2e8f0] bg-white px-3 py-2.5 text-sm leading-5 text-[#334155] file:rounded-[3px] file:border file:border-solid file:border-[#767676] file:bg-[#efefef] file:px-[7px] file:py-0 file:font-['Liberation_Sans',sans-serif] file:text-sm file:leading-5 file:text-black"
            />
          </div>

          <div className="mb-[22px] flex gap-2 text-[13px] leading-[18px] text-[#475569]">
            <label className="flex items-center gap-1.5">
              <input type="checkbox" className="size-[13px]" />
              Buka 24 Jam
            </label>
            <label className="flex items-center gap-1.5">
              <input type="checkbox" className="size-[13px]" />
              Ada IGD
            </label>
          </div>

          <button
            type="submit"
            className="flex h-[49px] w-full items-center justify-center rounded-[10px] bg-[#2563eb] font-['Liberation_Sans',sans-serif] text-base font-bold text-white"
          >
            <OutboxIcon className="mr-[9px] ml-[3px] h-[15px] w-3.5" />
            Kirim Data
          </button>
          <button
            type="button"
            className="mt-1.5 block h-10 w-full rounded-[10px] bg-[#f1f5f9] font-['Liberation_Sans',sans-serif] text-sm font-bold text-[#334155]"
          >
            Batal
          </button>
        </form>
      </div>
    </div>
  );
}
